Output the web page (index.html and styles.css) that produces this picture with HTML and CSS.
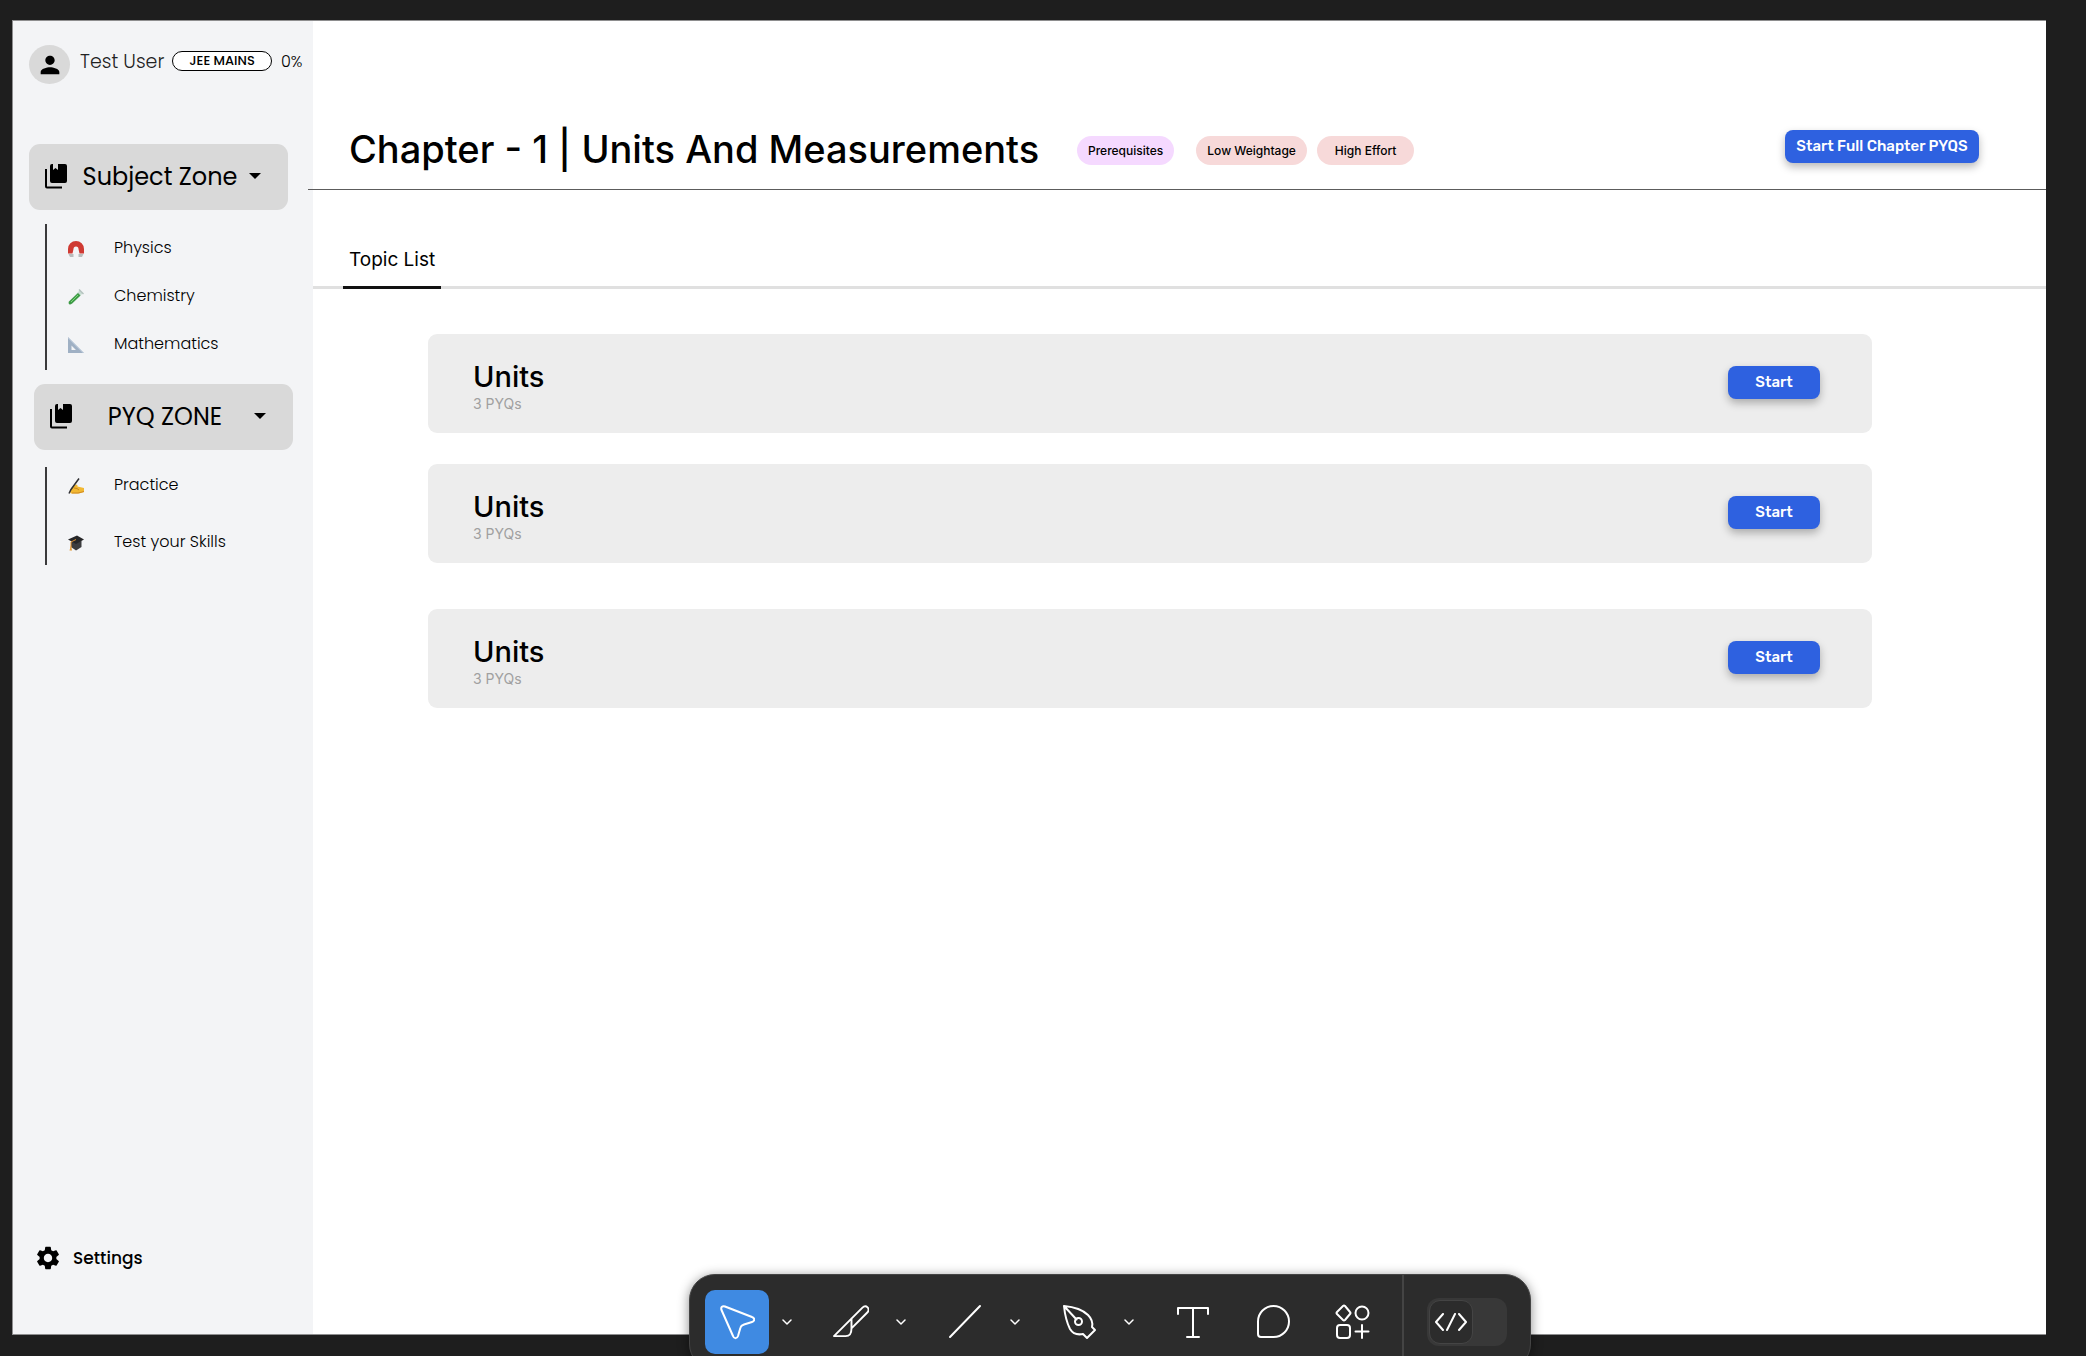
FILE: index.html
```html
<!DOCTYPE html>
<html lang="en">
<head>
<meta charset="utf-8">
<title>Chapter 1 | Units And Measurements</title>
<link rel="stylesheet" href="styles.css">
</head>
<body>
<svg class="defs" aria-hidden="true">
  <symbol id="books" viewBox="0 0 22 25">
    <path d="M5 2a2 2 0 0 1 2-2h1v6l2.500-2 2.500 2V0h7a2 2 0 0 1 2 2v15a2 2 0 0 1-2 2H7a2 2 0 0 1-2-2z"/>
    <path d="M0 5h2v17.500h15v2H2a2 2 0 0 1-2-2z"/>
  </symbol>
  <symbol id="chevron" viewBox="0 0 10 6">
    <path d="M1 1l4 4 4-4" fill="none" stroke="#fff" stroke-width="1.500" stroke-linecap="round" stroke-linejoin="round"/>
  </symbol>
</svg>
<div class="app">
  <aside class="sidebar">
    <div class="profile">
      <span class="avatar"><svg viewBox="0 0 24 24" width="28" height="28"><path d="M12 12c2.210 0 4-1.790 4-4s-1.790-4-4-4-4 1.790-4 4 1.790 4 4 4zm0 2c-2.670 0-8 1.340-8 4v2h16v-2c0-2.660-5.330-4-8-4z"/></svg></span>
      <span class="name">Test User</span>
      <span class="exam">JEE MAINS</span>
      <span class="progress">0%</span>
    </div>
    <nav>
      <button class="zone" type="button">
        <svg class="zone-icon"><use href="#books"/></svg>
        <span class="zone-name">Subject Zone</span>
        <svg class="caret" viewBox="0 0 12 6"><path d="M0 0h12L6 6z"/></svg>
      </button>
      <ul class="links">
        <li><a href="#physics"><svg viewBox="0 0 16 16"><path d="M0 12.500V8a8 8 0 0 1 16 0v4.500h-4.500L10.500 8a2.500 2.500 0 0 0-5 0l-1 4.500z" fill="#cf3a33"/><path d="M.5 13H5.500V16H2zM10.500 13h5l-1.500 3h-3.500z" fill="#b9bcbc"/></svg>Physics</a></li>
        <li><a href="#chemistry"><svg viewBox="0 0 16 16"><path d="M12 1l3 3L4 15l-3 .5L1 12.500z" fill="#c9ddd4"/><path d="M10 4l2.500 2.500L4 14.500q-2 1.500-3 .5t0-2.500z" fill="#3d9a45"/><path d="M10 6L3 13" stroke="#7cd67c"/><path d="M11 .5l4.500 4.500" stroke="#b6c3c0" stroke-width="1.500"/></svg>Chemistry</a></li>
        <li><a href="#mathematics"><svg viewBox="0 0 16 16"><path fill-rule="evenodd" d="M0 0l16 16H0zM3.500 8.500v4.500h4.500z" fill="#9fb0c4"/><path d="M.5 1l15 15" stroke="#c6d3e2"/></svg>Mathematics</a></li>
      </ul>
      <button class="zone zone-pyq" type="button">
        <svg class="zone-icon"><use href="#books"/></svg>
        <span class="zone-name">PYQ ZONE</span>
        <svg class="caret" viewBox="0 0 12 6"><path d="M0 0h12L6 6z"/></svg>
      </button>
      <ul class="links links-pyq">
        <li><a href="#practice"><svg viewBox="0 0 16 16"><path d="M2 14q0-3 2-4.500L8 6.500q2 0 1.500 2L16 10v4l-5 1.500H3z" fill="#f2b832"/><path d="M4 15h6l6-1.500" stroke="#cf8a24" fill="none"/><path d="M11 .5L3 11.500l-2 4" stroke="#303034" stroke-width="1.500" fill="none"/><path d="M6 10l3 .5 2 1.500" stroke="#c98620" fill="none"/></svg>Practice</a></li>
        <li><a href="#test"><svg viewBox="0 0 16 16"><path d="M3 7v5l5 3.500 5.500-3.500V6z" fill="#3c3c3e"/><path d="M0 4.500L9 .5l7 4L8 9z" fill="#252527"/><path d="M8 4.500L3 7v6" stroke="#d98e32" fill="none"/><path d="M3 10l-1.500 5.500h2.500z" fill="#e39a36"/></svg>Test your Skills</a></li>
      </ul>
    </nav>
    <a class="settings" href="#settings"><svg viewBox="0 0 24 24" width="28" height="28"><path d="M19.140 12.940c.04-.3.060-.61.060-.94 0-.32-.02-.64-.07-.94l2.030-1.580c.18-.14.23-.41.12-.61l-1.920-3.320c-.12-.22-.37-.29-.59-.22l-2.390.96c-.5-.38-1.030-.7-1.620-.94l-.36-2.540c-.04-.24-.24-.41-.48-.41h-3.840c-.24 0-.43.17-.47.41l-.36 2.540c-.59.24-1.130.57-1.620.94l-2.390-.96c-.22-.08-.47 0-.59.22L2.740 8.870c-.12.21-.08.47.12.61l2.030 1.580c-.05.3-.09.63-.09.94s.02.64.07.94l-2.030 1.580c-.18.14-.23.41-.12.61l1.920 3.320c.12.22.37.29.59.22l2.390-.96c.5.38 1.030.7 1.620.94l.36 2.540c.05.24.24.41.48.41h3.840c.24 0 .44-.17.47-.41l.36-2.540c.59-.24 1.130-.56 1.620-.94l2.390.96c.22.08.47 0 .59-.22l1.920-3.320c.12-.22.07-.47-.12-.61l-2.010-1.580zM12 15.600c-1.980 0-3.600-1.620-3.600-3.600s1.620-3.600 3.600-3.600 3.600 1.620 3.600 3.600-1.620 3.600-3.600 3.600z"/></svg>Settings</a>
  </aside>
  <main class="main">
    <header class="chapter">
      <h1>Chapter - 1 | Units And Measurements</h1>
      <span class="tag tag-violet">Prerequisites</span>
      <span class="tag tag-wide">Low Weightage</span>
      <span class="tag">High Effort</span>
      <button class="start start-full" type="button">Start Full Chapter PYQS</button>
    </header>
    <nav class="tabs"><a class="tab" href="#topics">Topic List</a></nav>
    <section class="topics">
      <article class="topic">
        <div class="topic-text"><h2>Units</h2><p>3 PYQs</p></div>
        <button class="start" type="button">Start</button>
      </article>
      <article class="topic">
        <div class="topic-text"><h2>Units</h2><p>3 PYQs</p></div>
        <button class="start" type="button">Start</button>
      </article>
      <article class="topic topic-apart">
        <div class="topic-text"><h2>Units</h2><p>3 PYQs</p></div>
        <button class="start" type="button">Start</button>
      </article>
    </section>
  </main>
</div>
<div class="toolbar" role="toolbar" aria-label="Tools">
  <button class="tool tool-active" type="button" aria-label="Move"><svg viewBox="-1 -1 36 36"><path d="M1.500 5C.5 2 2.500.5 5 1.500L32 12c3 1 3 4 0 5l-8 2.500q-3 1-3.500 3L18 31c-1 3-4 3-5 0z"/></svg></button>
  <button class="more" type="button" aria-label="Move options"><svg><use href="#chevron"/></svg></button>
  <button class="tool" type="button" aria-label="Slice"><svg viewBox="-1 -1 37 37"><path d="M0 32L29 3c4-4 9 1 5 5L18 24c0 5-1 8-6 8zM18 14v10"/></svg></button>
  <button class="more" type="button" aria-label="Slice options"><svg><use href="#chevron"/></svg></button>
  <button class="tool" type="button" aria-label="Line"><svg viewBox="0 0 36 36"><path d="M3 33L33 2"/></svg></button>
  <button class="more" type="button" aria-label="Line options"><svg><use href="#chevron"/></svg></button>
  <button class="tool" type="button" aria-label="Pen"><svg viewBox="-2 -1 36 36"><path d="M1 1c11 1 18 3 24 9 4 4 5 8 4 12l3 3-8 8-4-4c-5 1-10 0-13-5C4 18 2 11 1 1zl12.500 13.500"/><circle cx="15.500" cy="16.500" r="3.500"/></svg></button>
  <button class="more" type="button" aria-label="Pen options"><svg><use href="#chevron"/></svg></button>
  <button class="tool" type="button" aria-label="Text"><svg viewBox="0 0 36 36"><path d="M3 10V4h30v6M18 4v29M12 33h12"/></svg></button>
  <button class="tool" type="button" aria-label="Comment"><svg viewBox="0 0 36 36"><path d="M3 17.500a15.500 15.500 0 1 1 15.500 15.500H6q-3 0-3-3z"/></svg></button>
  <button class="tool" type="button" aria-label="Actions"><svg viewBox="1 0 36 36"><path d="M9 2q1-1 2 0l5 6q1 1 0 2l-5 6q-1 1-2 0L3 10q-1-1 0-2zM28 21v13M21.500 27.500h13"/><circle cx="28" cy="9" r="6.500"/><rect x="3" y="21" width="13" height="13" rx="3"/></svg></button>
  <div class="dev">
    <button class="switch" type="button" aria-label="Dev Mode"><span class="knob"><svg viewBox="0 0 32 18"><path d="M8 1L1 9l7 8M24 1l7 8-7 8M20 1l-8 16"/></svg></span></button>
  </div>
</div>
</body>
</html>
```

FILE: styles.css
```css
* { box-sizing: border-box; }
body {
  margin: 0;
  padding: 20px 40px 21px 12px;
  background: #1e1e1e;
  color: #000;
  font-family: Inter, "Noto Sans", sans-serif;
}
button { border: 0; padding: 0; background: none; color: inherit; font: inherit; }
a { color: inherit; text-decoration: none; }
h1, h2, p, ul { margin: 0; padding: 0; font-weight: 400; }
ul { list-style: none; }
svg { display: block; flex: none; }
.defs { position: absolute; width: 0; height: 0; }

.app {
  display: flex;
  min-height: calc(100vh - 41px);
  background: #fff;
  border: solid #8e8e8f;
  border-width: 1px 0 1px 1px;
}

.sidebar {
  display: flex;
  flex-direction: column;
  flex: none;
  width: 300px;
  padding: 24px 8px 62px 16px;
  background: #f3f4f6;
  font-family: Poppins, Inter, sans-serif;
}
.profile { display: flex; height: 40px; margin-bottom: 59px; white-space: nowrap; }
.avatar {
  display: grid;
  place-items: center;
  width: 41px;
  height: 39px;
  border-radius: 50%;
  background: #d9d9d9;
}
.name { width: 92px; margin-left: 10px; color: #222; font-size: 19px; font-weight: 300; line-height: 34px; }
.exam {
  width: 100px;
  height: 20px;
  margin-top: 6px;
  border: 1px solid #000;
  border-radius: 10px;
  background: #fff;
  font-size: 13px;
  font-weight: 500;
  line-height: 18px;
  text-align: center;
}
.progress { margin-left: 9px; font-size: 16px; font-weight: 300; line-height: 34px; }

.zone {
  display: flex;
  align-items: center;
  width: 259px;
  height: 66px;
  padding: 0 27px 2px 16px;
  border-radius: 11px;
  background: #d9d9d9;
  font-size: 24px;
}
.zone-icon { width: 22px; height: 25px; }
.zone-name { flex: 1; padding-left: 4px; text-align: center; }
.caret { width: 12px; height: 6px; }
.zone-pyq { margin: 14px 0 17px 5px; }

.links { margin-left: 16px; border-left: 2px solid #3a3a3c; }
.links li { height: 48px; }
.links li:last-child { height: 50px; }
.links a { display: flex; align-items: center; gap: 30px; height: 48px; padding: 0 0 1px 21px; font-size: 16px; font-weight: 300; }
.links svg { width: 16px; height: 16px; margin-top: 2px; }
.zone + .links { margin-top: 14px; }
.zone-pyq + .links { margin-top: 17px; }
.links-pyq li { height: 57px; }
.links-pyq li:last-child { height: 41px; }
.links-pyq a { height: 36px; }

.settings {
  display: flex;
  align-items: center;
  gap: 11px;
  margin-top: auto;
  padding-left: 5px;
  font-size: 17px;
  font-weight: 500;
  line-height: 24px;
}

.main { flex: 1; min-width: 0; }
.chapter {
  display: flex;
  align-items: center;
  height: 169px;
  margin-left: -5px;
  padding: 88px 67px 0 41px;
  border-bottom: 1px solid #5c5c5c;
  white-space: nowrap;
}
h1 { margin-right: 38px; font-size: 38px; font-weight: 500; line-height: 48px; }
.tag {
  width: 97px;
  margin: 2px 10px 0 0;
  border-radius: 15px;
  background: #f7d9d9;
  font-size: 12px;
  font-weight: 500;
  line-height: 29px;
  text-align: center;
}
.tag-wide { width: 111px; }
.tag-violet { margin-right: 22px; background: #f5d9ff; }

.start {
  flex: none;
  width: 92px;
  height: 33px;
  padding-bottom: 1px;
  border-radius: 8px;
  background: #2e61e0;
  box-shadow: 0 4px 8px rgba(0, 0, 0, .28);
  color: #fff;
  font-family: Rubik, Roboto, sans-serif;
  font-size: 15px;
  font-weight: 500;
}
.start-full { width: 194px; margin: 0 0 6px auto; }

.tabs { display: flex; align-items: flex-end; height: 99px; padding-left: 30px; border-bottom: 3px solid #e0e0e0; }
.tab {
  margin-bottom: -3px;
  padding: 0 6px 14px;
  border-bottom: 3px solid #111;
  font-size: 19px;
  line-height: 24px;
}

.topics { display: grid; gap: 31px; padding: 45px 174px 45px 115px; }
.topic {
  display: flex;
  align-items: center;
  justify-content: space-between;
  height: 99px;
  padding: 0 52px 2px 45px;
  border-radius: 9px;
  background: #ededed;
}
.topic-apart { margin-top: 15px; }
.topic-text { padding-top: 6px; }
h2 { font-size: 29px; font-weight: 500; line-height: 36px; }
.topic p { color: #a0a0a0; font-size: 14px; line-height: 18px; }

.toolbar {
  position: fixed;
  left: 689px;
  bottom: -14px;
  display: flex;
  align-items: center;
  width: 842px;
  height: 96px;
  padding-left: 15px;
  border: 1px solid #444;
  border-radius: 26px;
  background: #2c2c2c;
  box-shadow: 0 2px 12px rgba(0, 0, 0, .45);
}
.tool { display: grid; place-items: center; width: 64px; height: 64px; margin-right: 16px; border-radius: 10px; }
.tool svg { width: 36px; height: 36px; fill: none; stroke: #fff; stroke-width: 2; stroke-linecap: round; stroke-linejoin: round; }
.tool:has(+ .more) { margin-right: 0; }
.tool-active { background: #3f8ae2; }
.more { display: grid; place-items: center; width: 36px; height: 64px; margin-right: 14px; }
.more svg { width: 10px; height: 6px; }
.dev { display: flex; align-items: center; height: 94px; margin-left: auto; padding: 0 23px; border-left: 2px solid #444; }
.switch { width: 80px; height: 48px; padding: 2px; border-radius: 12px; background: #383838; }
.knob { display: grid; place-items: center; width: 44px; height: 44px; border: 1px solid #444; border-radius: 11px; background: #2c2c2c; }
.knob svg { width: 32px; height: 18px; fill: none; stroke: #fff; stroke-width: 2; stroke-linecap: round; stroke-linejoin: round; }
```
